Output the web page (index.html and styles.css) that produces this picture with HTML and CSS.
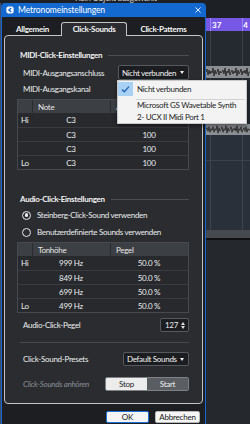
FILE: index.html
```html
<!DOCTYPE html>
<html lang="de">
<head>
    <meta charset="UTF-8">
    <meta name="viewport" content="width=device-width, initial-scale=1.0">
    <title>Metronomeinstellungen</title>
    <link rel="stylesheet" href="styles.css">
</head>
<body>
    <div class="topbar"><span class="status">Kein Objekt ausgewählt</span></div>
    <div class="screen">
        <div class="edge"></div>

        <div class="dialog">
            <div class="titlebar">
                <svg class="app-icon" viewBox="0 0 10 10">
                    <rect x="0.5" y="0.5" width="9" height="9" rx="2.5" fill="#fff"/>
                    <path d="M6.6 2.4 L3.6 5 L6.6 7.6" stroke="#1469d0" stroke-width="1.7" fill="none"/>
                </svg>
                <span class="title">Metronomeinstellungen</span>
                <svg class="close" viewBox="0 0 7 7">
                    <path d="M0.5 0.5 L6.5 6.5 M6.5 0.5 L0.5 6.5" stroke="#fff" stroke-width="1"/>
                </svg>
            </div>

            <div class="tabs">
                <div class="tab tab-general">Allgemein</div>
                <div class="tab tab-sounds active">Click-Sounds</div>
                <div class="tab tab-patterns">Click-Patterns</div>
            </div>

            <div class="panel">
                <div class="section-title"><span>MIDI-Click-Einstellungen</span><i class="rule"></i></div>
                <div class="field field-port">
                    <span>MIDI-Ausgangsanschluss</span>
                    <div class="select select-port">Nicht verbunden<i class="caret"></i></div>
                </div>
                <div class="field field-channel"><span>MIDI-Ausgangskanal</span></div>

                <div class="grid grid-midi">
                    <div class="grid-head"><span></span><span>Note</span><span>Anschlag</span></div>
                    <div class="grid-row"><span>Hi</span><span>C3</span><span>100</span></div>
                    <div class="grid-row"><span></span><span>C3</span><span>100</span></div>
                    <div class="grid-row"><span></span><span>C3</span><span>100</span></div>
                    <div class="grid-row"><span>Lo</span><span>C3</span><span>100</span></div>
                </div>

                <div class="section-title section-audio"><span>Audio-Click-Einstellungen</span><i class="rule"></i></div>
                <div class="radio radio-first"><i class="dot checked"></i>Steinberg-Click-Sound verwenden</div>
                <div class="radio"><i class="dot"></i>Benutzerdefinierte Sounds verwenden</div>

                <div class="grid grid-audio">
                    <div class="grid-head"><span></span><span>Tonhöhe</span><span>Pegel</span></div>
                    <div class="grid-row"><span>Hi</span><span>999 Hz</span><span>50.0 %</span></div>
                    <div class="grid-row"><span></span><span>849 Hz</span><span>50.0 %</span></div>
                    <div class="grid-row"><span></span><span>699 Hz</span><span>50.0 %</span></div>
                    <div class="grid-row"><span>Lo</span><span>499 Hz</span><span>50.0 %</span></div>
                </div>

                <div class="field field-level">
                    <span>Audio-Click-Pegel</span>
                    <div class="spin">127<i class="spin-arrows"><b class="up"></b><b class="down"></b></i></div>
                </div>

                <div class="separator"></div>

                <div class="field field-presets">
                    <span>Click-Sound-Presets</span>
                    <div class="select select-presets">Default Sounds<i class="caret"></i></div>
                </div>

                <div class="field field-listen">
                    <span class="muted">Click-Sounds anhören</span>
                    <div class="toggle">
                        <span class="toggle-stop">Stop</span>
                        <span class="toggle-start">Start</span>
                    </div>
                </div>
            </div>

            <div class="footer">
                <button class="btn btn-ok">OK</button>
                <button class="btn btn-cancel">Abbrechen</button>
            </div>
        </div>

        <div class="daw">
            <div class="daw-top"></div>
            <div class="ruler"><span class="bar-37">37</span><span class="bar-4">4</span></div>
            <div class="lane lane-1"></div>
            <svg class="wave" viewBox="0 0 44 12" preserveAspectRatio="none">
                <path d="M0 6 L1 3 L2 9 L3 4 L4 8 L5 5 L6 7 L7 2 L8 10 L9 4 L10 8 L11 6 L12 3 L13 9 L14 5 L15 7 L16 6 L17 4 L18 8 L19 2 L20 10 L21 5 L22 7 L23 3 L24 9 L25 6 L26 4 L27 8 L28 5 L29 7 L30 2 L31 10 L32 4 L33 8 L34 6 L35 3 L36 9 L37 5 L38 7 L39 4 L40 8 L41 2 L42 10 L43 6 L44 6"/>
            </svg>
            <div class="lane lane-2"></div>
            <svg class="wave wave-2" viewBox="0 0 44 12" preserveAspectRatio="none">
                <path d="M0 6 L1 4 L2 8 L3 3 L4 9 L5 5 L6 7 L7 3 L8 9 L9 5 L10 7 L11 2 L12 10 L13 4 L14 8 L15 6 L16 3 L17 9 L18 5 L19 7 L20 2 L21 10 L22 4 L23 8 L24 6 L25 3 L26 9 L27 5 L28 7 L29 4 L30 8 L31 2 L32 10 L33 5 L34 7 L35 3 L36 9 L37 6 L38 4 L39 8 L40 3 L41 9 L42 5 L43 7 L44 6"/>
            </svg>
            <div class="lane lane-3"></div>
            <div class="daw-bar"></div>
            <div class="daw-line"></div>
            <div class="daw-rest"></div>
        </div>
    </div>

    <div class="popup">
        <div class="menu-item menu-checked">
            <span class="check">
                <svg viewBox="0 0 15 14"><path d="M4 7.5 L6.3 9.8 L11 4.6" stroke="#1d62b8" stroke-width="1.3" fill="none"/></svg>
            </span>
            <span class="menu-label">Nicht verbunden</span>
        </div>
        <div class="menu-sep"></div>
        <div class="menu-item menu-second"><span class="check"></span><span class="menu-label">Microsoft GS Wavetable Synth</span></div>
        <div class="menu-item menu-third"><span class="check"></span><span class="menu-label">2- UCX II Midi Port 1</span></div>
    </div>
</body>
</html>
```

FILE: styles.css
```css
*{
    box-sizing: border-box;
}

body{
    margin: 0;
    width: 250px;
    height: 424px;
    overflow: hidden;
    position: relative;
    background-color: #1d2024;
    font-family: Lato, "Liberation Sans", sans-serif;
    font-size: 8px;
    letter-spacing: -0.3px;
    white-space: nowrap;
    color: #ebecee;
}

.topbar{
    height: 3px;
    overflow: hidden;
    padding-left: 75px;
}
.status{
    display: block;
    font-size: 8.5px;
    line-height: 10px;
    margin-top: -7px;
    color: #c9ccd1;
}

.screen{
    display: flex;
    height: 421px;
}

.edge{
    width: 1px;
    background-color: #3f4c6c;
}

/* Dialog */
.dialog{
    width: 205px;
    display: flex;
    flex-direction: column;
    background-color: #1c1e21;
    border-left: 1px solid #1469d0;
    border-right: 1px solid #1469d0;
    border-radius: 4px 4px 0 0;
}

.titlebar{
    height: 14px;
    display: flex;
    align-items: center;
    padding: 0 4px;
    background-color: #1469d0;
    border-radius: 3px 3px 0 0;
    color: #fff;
    font-size: 8.5px;
    letter-spacing: -0.1px;
}
.app-icon{
    width: 8px;
    height: 8px;
}
.title{
    margin-left: 4px;
    flex: 1;
}
.close{
    width: 6px;
    height: 6px;
}

.tabs{
    height: 18px;
    display: flex;
    align-items: flex-end;
    padding-left: 2px;
}
.tab{
    height: 13px;
    display: flex;
    align-items: center;
    justify-content: center;
    font-weight: bold;
    color: #f4f4f4;
}
.tab-general{ width: 57px; }
.tab-sounds{ width: 66px; }
.tab-patterns{ width: 73px; }
.tab.active{
    height: 14px;
    margin-bottom: -1px;
    padding-bottom: 1px;
    position: relative;
    z-index: 1;
    background-color: #2a2c30;
    border: 1px solid #c3c4c6;
    border-bottom: 0;
    border-radius: 3px 3px 0 0;
}

.panel{
    height: 369px;
    margin: 0 2px;
    display: flex;
    flex-direction: column;
    padding: 12px 13px 0 12px;
    background-color: #2a2c30;
    border: 1px solid #c3c4c6;
    border-radius: 4px;
}

.section-title{
    height: 14px;
    display: flex;
    align-items: center;
    gap: 6px;
    padding-left: 3px;
    font-weight: bold;
    color: #f2f2f2;
}
.rule{
    flex: 1;
    height: 1px;
    background-color: #4a4d52;
}
.section-audio{ margin-top: 22px; }

.field{
    display: flex;
    align-items: center;
    justify-content: space-between;
    padding-left: 6px;
    height: 14px;
}
.field-port{ height: 15px; margin-top: 3px; }
.field-channel{ margin-top: 2px; }
.field-level{ margin-top: 5px; }
.field-presets{ margin-top: 9px; }
.field-listen{ margin-top: 11px; }

.select{
    height: 15px;
    display: flex;
    align-items: center;
    justify-content: space-between;
    padding: 0 4px 0 3px;
    background-color: #1b1d20;
    border: 1px solid #56595e;
    border-radius: 2px;
    color: #f4f4f4;
}
.select-port{ width: 71px; }
.select-presets{ width: 66px; height: 14px; }
.caret{
    width: 0;
    height: 0;
    border-left: 2.5px solid transparent;
    border-right: 2.5px solid transparent;
    border-top: 3.5px solid #f2f2f2;
}

/* Tables */
.grid{
    border: 1px solid #46494e;
    background-color: #27292d;
}
.grid-midi{ margin-top: 3px; }
.grid-audio{ margin-top: 2px; }

.grid-head,
.grid-row{
    display: grid;
    grid-template-columns: 14px 78px 1fr;
    align-items: center;
}
.grid-head{
    height: 13px;
    background-color: #3c3f44;
    color: #e6e6e6;
}
.grid-head span{
    height: 100%;
    display: flex;
    align-items: center;
    padding-left: 5px;
}
.grid-head span + span{
    border-left: 1px solid #2a2c30;
}
.grid-row{
    height: 14px;
    border-top: 1px solid #393b40;
}
.grid-head + .grid-row{
    border-top: 0;
}
.grid-row span{
    text-align: center;
}
.grid-row span:first-child{
    text-align: left;
    padding-left: 3px;
}

/* Radios */
.radio{
    height: 16px;
    margin-top: 1px;
    display: flex;
    align-items: center;
    gap: 6px;
    padding-left: 5px;
}
.dot{
    width: 9px;
    height: 9px;
    border: 1.3px solid #e8e8e8;
    border-radius: 50%;
    display: flex;
    align-items: center;
    justify-content: center;
}
.dot.checked::after{
    content: "";
    width: 3.5px;
    height: 3.5px;
    border-radius: 50%;
    background-color: #f0f0f0;
}

.spin{
    width: 29px;
    height: 14px;
    display: flex;
    align-items: center;
    justify-content: space-between;
    padding: 0 3px 0 4px;
    background-color: #1b1d20;
    border: 1px solid #56595e;
    border-radius: 2px;
}
.spin-arrows{
    display: flex;
    flex-direction: column;
    gap: 1px;
}
.spin-arrows b{
    width: 0;
    height: 0;
    border-left: 2px solid transparent;
    border-right: 2px solid transparent;
}
.spin-arrows .up{ border-bottom: 3px solid #e0e0e0; }
.spin-arrows .down{ border-top: 3px solid #e0e0e0; }

.separator{
    height: 1px;
    margin: 10px 0 0 3px;
    background-color: #46494e;
}

.muted{
    font-style: italic;
    color: #8b8e93;
}

.toggle{
    width: 84px;
    height: 14px;
    display: flex;
    border: 1px solid #7f8287;
    border-radius: 2px;
    overflow: hidden;
}
.toggle span{
    flex: 1;
    display: flex;
    align-items: center;
    justify-content: center;
}
.toggle-stop{
    background-color: #ececec;
    color: #1e1e1e;
}
.toggle-start{
    background-color: #5a5d62;
    color: #f0f0f0;
}

.footer{
    flex: 1;
    display: flex;
    justify-content: flex-end;
    align-items: flex-start;
    gap: 6px;
    padding: 7px 5px 0 0;
}
.btn{
    height: 12px;
    padding: 0;
    font-family: inherit;
    font-size: 8px;
    letter-spacing: -0.2px;
    color: #161616;
    background-color: #f5f5f5;
    border: 1px solid #b9b9b9;
    border-radius: 2px;
}
.btn-ok{
    width: 43px;
    border-color: #1a6fd8;
}
.btn-cancel{
    width: 45px;
}

/* DAW behind the dialog */
.daw{
    width: 44px;
    display: flex;
    flex-direction: column;
}
.daw-top{
    height: 15px;
    background-color: #1d2024;
}
.ruler{
    height: 13px;
    display: flex;
    align-items: center;
    background: linear-gradient(90deg, transparent 4px, #9c86f2 4px, #9c86f2 5px, transparent 5px, transparent 36px, #9c86f2 36px, #9c86f2 37px, transparent 37px), #7657e6;
    color: #fff;
    font-size: 8px;
    font-weight: bold;
    letter-spacing: 0;
}
.bar-37{ margin-left: 6px; }
.bar-4{ margin-left: 22px; }
.lane{
    background: linear-gradient(90deg, transparent 4px, #3a404a 4px, #3a404a 5px, transparent 5px, transparent 36px, #3a404a 36px, #3a404a 37px, transparent 37px), #252a31;
}
.lane-1{ height: 35px; }
.lane-2{ height: 46px; }
.lane-3{
    height: 95px;
    background: linear-gradient(180deg, transparent 25px, #3b424c 25px, #3b424c 26px, transparent 26px),
        linear-gradient(90deg, transparent 4px, #3d4450 4px, #3d4450 5px, transparent 5px, transparent 36px, #3d4450 36px, #3d4450 37px, transparent 37px), #29303a;
}
.wave{
    display: block;
    width: 44px;
    height: 12px;
    background-color: #8b8e93;
}
.wave-2{ height: 11px; }
.wave path{
    fill: none;
    stroke: #1b1b1b;
    stroke-width: 0.8;
}
.daw-bar{
    height: 8px;
    background-color: #46494e;
}
.daw-line{
    height: 2px;
    background-color: #0f1012;
}
.daw-rest{
    flex: 1;
    background-color: #25282c;
}

/* Open port dropdown */
.popup{
    position: absolute;
    left: 117px;
    top: 80px;
    width: 130px;
    height: 44px;
    padding-top: 1px;
    background-color: #f3f3f3;
    border: 1px solid #c9c9c9;
    box-shadow: 0 2px 4px rgba(0, 0, 0, 0.45);
    color: #1b1b1b;
}
.menu-item{
    height: 14px;
    display: flex;
    align-items: center;
}
.check{
    width: 15px;
    height: 14px;
}
.menu-checked .check{
    background-color: #a9d1f3;
}
.check svg{
    display: block;
    width: 15px;
    height: 14px;
}
.menu-label{
    margin-left: 4px;
}
.menu-sep{
    height: 1px;
    margin: 3px 1px 0 18px;
    background-color: #d2d2d2;
}
.menu-second{ height: 10px; }
.menu-third{ height: 13px; }
```
